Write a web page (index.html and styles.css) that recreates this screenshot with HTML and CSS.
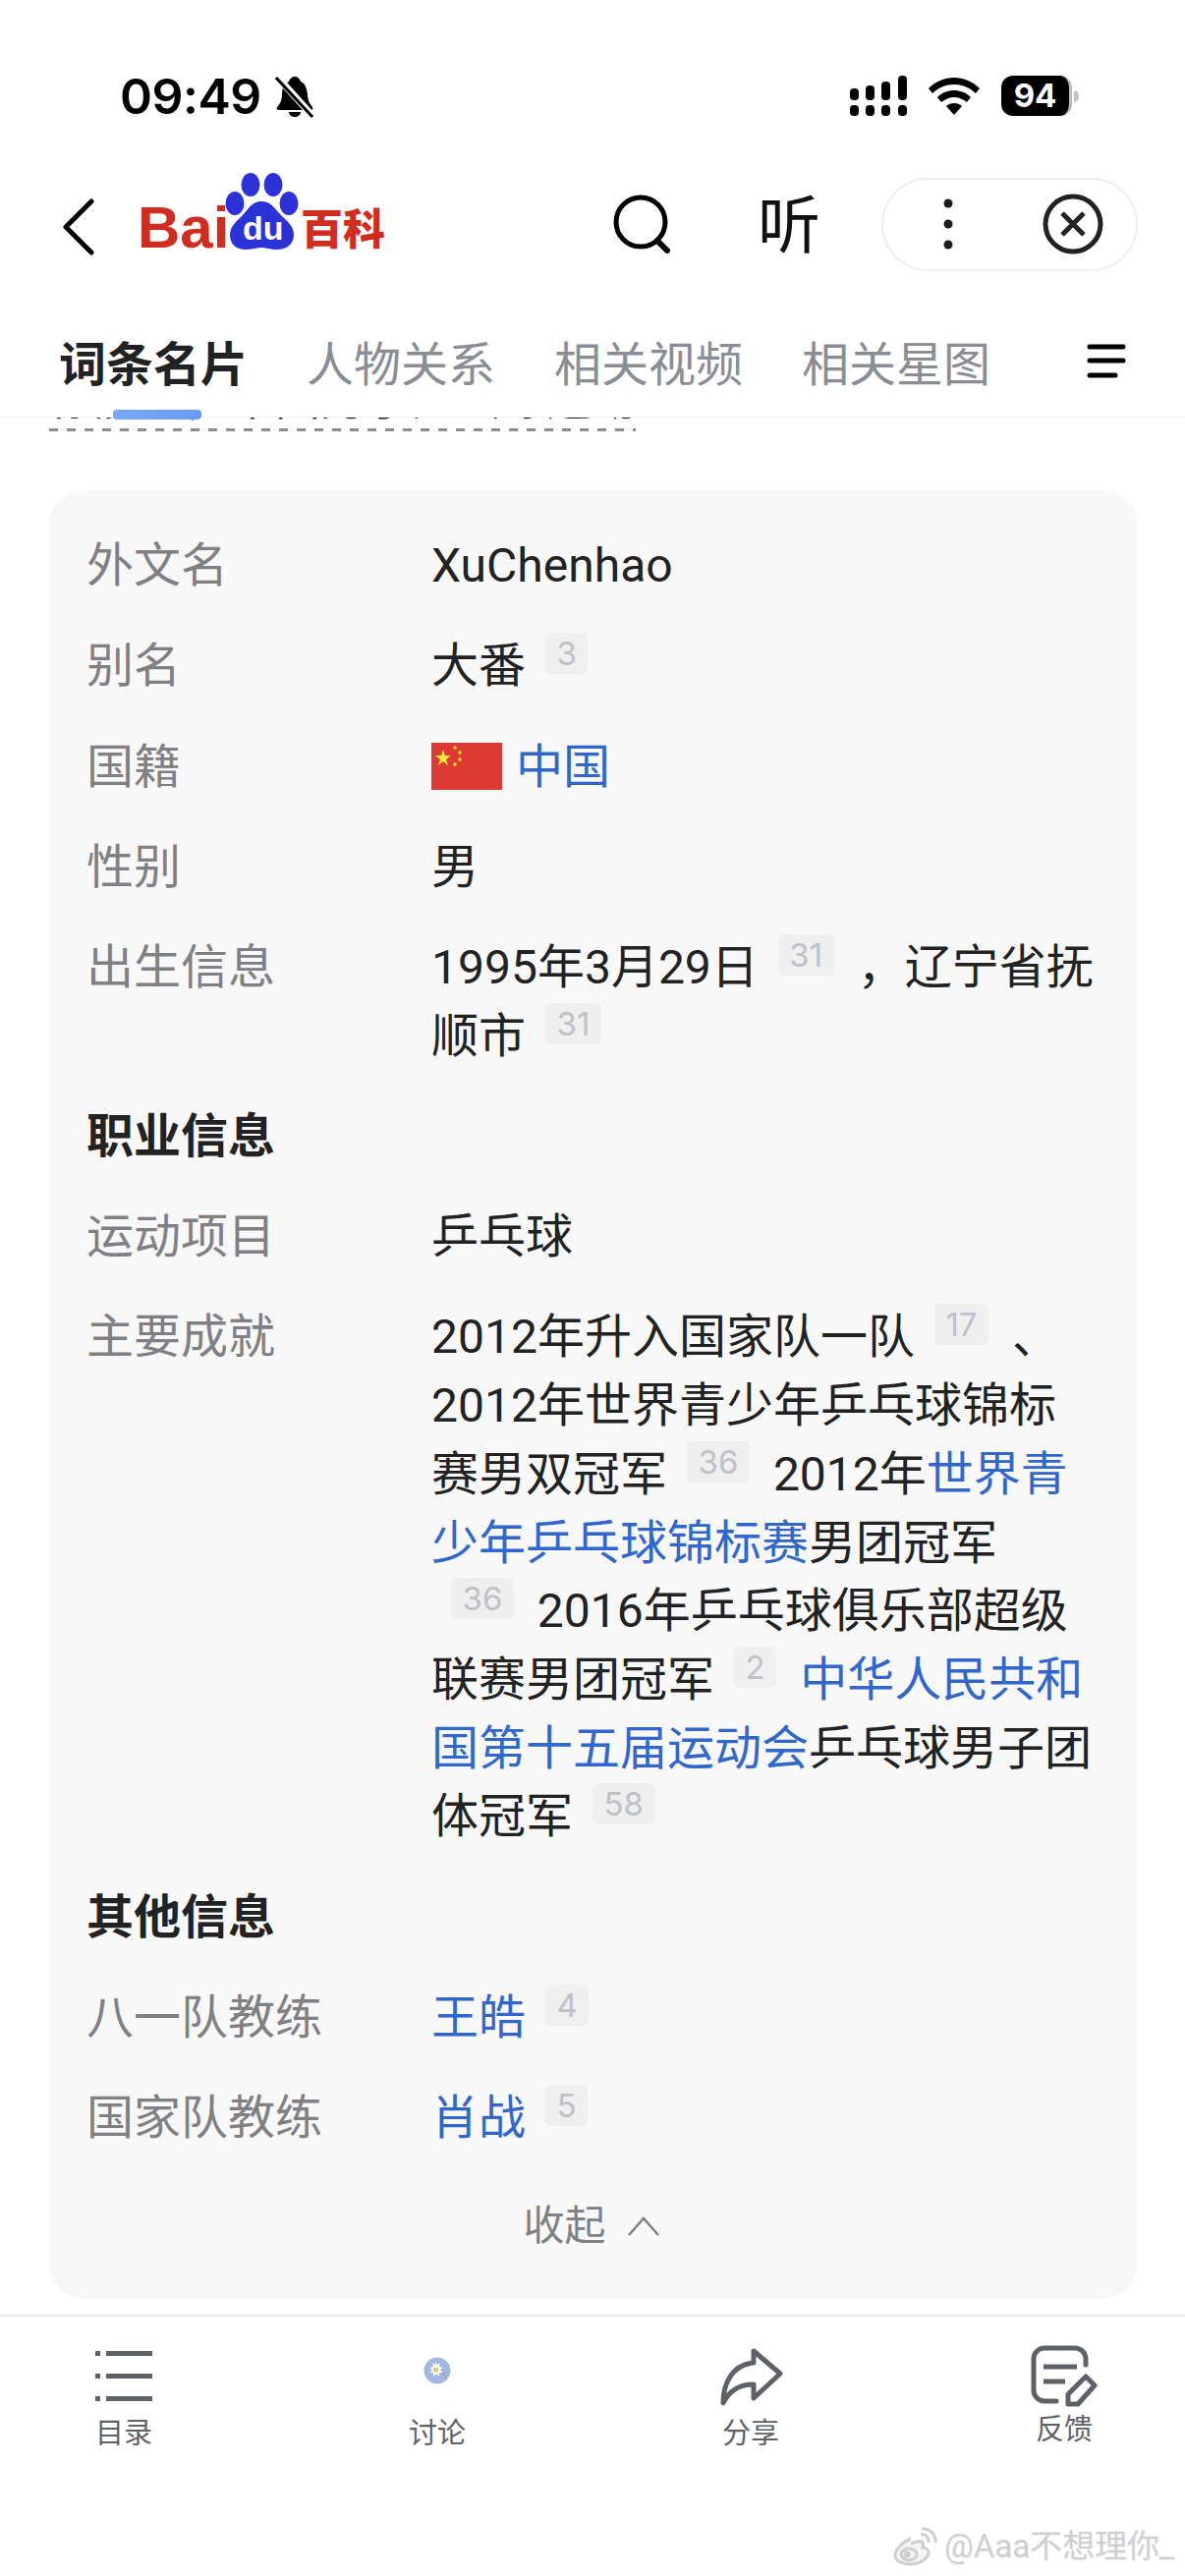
FILE: index.html
```html
<!DOCTYPE html>
<html lang="zh-CN">
<head>
    <meta charset="UTF-8">
    <meta name="viewport" content="width=device-width, initial-scale=1.0">
    <title>徐晨皓 百度百科</title>
    <link rel="stylesheet" href="styles.css">
</head>
<body>
    <!-- 状态栏 -->
    <div class="status-bar">
        <div class="status-left">
            <span class="status-time">09:49</span>
            <svg class="status-bell" width="40" height="43" viewBox="0 0 40 43">
                <path d="M20 1c3 0 5 2 6 5 5 2 6 7 7 13 0 6 2 9 5 13 1 2 0 3-2 3H4c-2 0-3-1-2-3 3-3 5-7 5-13 0-6 2-11 7-13 1-3 3-5 6-5z" fill="#000"/>
                <path d="M14 37h12c0 3-3 5-6 5s-6-2-6-5z" fill="#000"/>
                <path d="M2 1l37 41" stroke="#fff" stroke-width="7"/>
                <path d="M1 2l37 40" stroke="#000" stroke-width="3"/>
            </svg>
        </div>
        <div class="status-right">
            <svg width="58" height="41" viewBox="0 0 58 41" fill="#000">
                <rect x="0" y="13" width="9" height="12" rx="4"/>
                <rect x="16" y="10" width="9" height="15" rx="4"/>
                <rect x="32" y="6" width="9" height="19" rx="4"/>
                <rect x="49" y="0" width="9" height="25" rx="4"/>
                <rect x="0" y="30" width="9" height="11" rx="4"/>
                <rect x="16" y="30" width="9" height="11" rx="4"/>
                <rect x="32" y="30" width="9" height="11" rx="4"/>
                <rect x="49" y="30" width="9" height="11" rx="4"/>
            </svg>
            <svg class="status-wifi" width="52" height="38" viewBox="0 0 52 38" fill="#000">
                <path d="M26 0c10 0 19 4 26 11l-4 5C42 10 34 7 26 7S10 10 4 16l-4-5C7 4 16 0 26 0z"/>
                <path d="M26 13c6 0 12 2 17 7l-4 5c-4-3-8-5-13-5s-9 2-13 5l-4-5c5-5 11-7 17-7z"/>
                <path d="M26 26c3 0 6 1 8 3l-8 9-8-9c2-2 5-3 8-3z"/>
            </svg>
            <div class="battery">
                <span class="battery-body">94</span>
                <span class="battery-nub"></span>
            </div>
        </div>
    </div>

    <!-- 顶部导航 -->
    <div class="top-nav">
        <svg class="nav-back" width="33" height="58" viewBox="0 0 33 58">
            <path d="M30 3L4 29l26 26" fill="none" stroke="#000" stroke-width="5" stroke-linecap="round" stroke-linejoin="round"/>
        </svg>
        <svg class="nav-logo" width="255" height="92" viewBox="0 0 255 92">
            <text class="logo-bai" x="0" y="76">Bai</text>
            <g fill="#2b32d8">
                <ellipse cx="115" cy="12" rx="9.5" ry="12"/>
                <ellipse cx="138" cy="12" rx="9.5" ry="12"/>
                <ellipse cx="99" cy="31" rx="9.5" ry="12"/>
                <ellipse cx="154" cy="31" rx="9.5" ry="12"/>
                <path d="M126 29c10 0 14 8 20 14 6 6 13 11 13 20 0 10-8 15-17 15-7 0-11-2-16-2s-9 2-16 2c-9 0-16-5-16-15 0-9 7-14 13-20 6-6 9-14 19-14z"/>
            </g>
            <text class="logo-du" x="107" y="68">du</text>
            <text class="logo-baike" x="166" y="73">百科</text>
        </svg>
        <svg class="nav-search" width="60" height="60" viewBox="0 0 60 60">
            <circle cx="28" cy="28" r="25" fill="none" stroke="#000" stroke-width="5"/>
            <path d="M45 47l10 10" stroke="#000" stroke-width="6" stroke-linecap="round"/>
        </svg>
        <span class="nav-listen">听</span>
        <div class="nav-capsule">
            <svg width="14" height="56" viewBox="0 0 14 56" fill="#1c1c1c">
                <circle cx="7" cy="7" r="4.5"/>
                <circle cx="7" cy="28" r="4.5"/>
                <circle cx="7" cy="49" r="4.5"/>
            </svg>
            <svg width="62" height="62" viewBox="0 0 62 62">
                <circle cx="31" cy="31" r="28" fill="none" stroke="#222" stroke-width="5"/>
                <path d="M20 20l22 22M42 20L20 42" stroke="#222" stroke-width="5"/>
            </svg>
        </div>
    </div>

    <!-- 标签栏 -->
    <div class="tab-bar">
        <span class="tab tab-active">词条名片</span>
        <span class="tab">人物关系</span>
        <span class="tab">相关视频</span>
        <span class="tab">相关星图</span>
        <svg class="tab-menu" width="40" height="36" viewBox="0 0 40 36">
            <path d="M3 3h34M3 17h34M3 32h26" stroke="#000" stroke-width="5" stroke-linecap="round"/>
        </svg>
    </div>

    <!-- 滚动后只露出底部的摘要 -->
    <div class="summary-clip">
        <div class="summary-text">徐晨皓，中国男子乒乓球运动</div>
    </div>

    <!-- 基本信息卡片 -->
    <div class="info-card">
        <div class="info-row">
            <div class="info-label">外文名</div>
            <div class="info-value">XuChenhao</div>
        </div>
        <div class="info-row">
            <div class="info-label">别名</div>
            <div class="info-value">大番<sup class="ref">3</sup></div>
        </div>
        <div class="info-row">
            <div class="info-label">国籍</div>
            <div class="info-value info-flag">
                <svg width="72" height="48" viewBox="0 0 72 48">
                    <rect width="72" height="48" fill="#dc3a32"/>
                    <path d="M12 7l2 6h6l-5 4 2 6-5-4-5 4 2-6-5-4h6z" fill="#ffe93c"/>
                    <g fill="#ffe93c">
                        <circle cx="24" cy="5" r="1.7"/>
                        <circle cx="29" cy="10" r="1.7"/>
                        <circle cx="29" cy="17" r="1.7"/>
                        <circle cx="24" cy="22" r="1.7"/>
                    </g>
                </svg>
                <a class="link">中国</a>
            </div>
        </div>
        <div class="info-row">
            <div class="info-label">性别</div>
            <div class="info-value">男</div>
        </div>
        <div class="info-row">
            <div class="info-label">出生信息</div>
            <div class="info-value">1995年3月29日<sup class="ref">31</sup>，辽宁省抚顺市<sup class="ref">31</sup></div>
        </div>

        <div class="info-group">职业信息</div>
        <div class="info-row">
            <div class="info-label">运动项目</div>
            <div class="info-value">乒乓球</div>
        </div>
        <div class="info-row">
            <div class="info-label">主要成就</div>
            <div class="info-value">2012年升入国家队一队<sup class="ref">17</sup>、2012年世界青少年乒乓球锦标赛男双冠军<sup class="ref">36</sup>2012年<a class="link">世界青少年乒乓球锦标赛</a>男团冠军<sup class="ref">36</sup>2016年乒乓球俱乐部超级联赛男团冠军<sup class="ref">2</sup><a class="link">中华人民共和国第十五届运动会</a>乒乓球男子团体冠军<sup class="ref">58</sup></div>
        </div>

        <div class="info-group">其他信息</div>
        <div class="info-row">
            <div class="info-label">八一队教练</div>
            <div class="info-value"><a class="link">王皓</a><sup class="ref">4</sup></div>
        </div>
        <div class="info-row">
            <div class="info-label">国家队教练</div>
            <div class="info-value"><a class="link">肖战</a><sup class="ref">5</sup></div>
        </div>

        <div class="info-collapse">
            <span>收起</span>
            <svg width="34" height="22" viewBox="0 0 34 22">
                <path d="M2 20L17 3l15 17" fill="none" stroke="#808080" stroke-width="2.5"/>
            </svg>
        </div>
    </div>

    <!-- 底部工具栏 -->
    <div class="tool-bar">
        <div class="tool-item">
            <div class="tool-icon">
                <svg width="58" height="52" viewBox="0 0 58 52" fill="#5f6168">
                    <rect x="0" y="0" width="5" height="5"/>
                    <rect x="11" y="0" width="47" height="5"/>
                    <rect x="0" y="23" width="5" height="5"/>
                    <rect x="11" y="23" width="47" height="5"/>
                    <rect x="0" y="46" width="5" height="5"/>
                    <rect x="11" y="46" width="47" height="5"/>
                </svg>
            </div>
            <span class="tool-label">目录</span>
        </div>
        <div class="tool-item">
            <div class="tool-icon tool-icon-avatar">
                <svg width="28" height="28" viewBox="0 0 28 28">
                    <circle cx="14" cy="14" r="13.5" fill="#a3b8de"/>
                    <path d="M15 13c4 2 7 5 8 9" fill="none" stroke="#7f9a86" stroke-width="1"/>
                    <path d="M12 5l2 3 3-2-1 4 4 1-3 2 3 3-4 0 0 4-3-3-3 3 0-4-4 0 3-3-3-2 4-1-1-4 3 2z" fill="#fbfaf4"/>
                    <circle cx="12.5" cy="13" r="2.6" fill="#e7c56e"/>
                </svg>
            </div>
            <span class="tool-label">讨论</span>
        </div>
        <div class="tool-item">
            <div class="tool-icon tool-icon-share">
                <svg width="66" height="62" viewBox="0 0 66 62">
                    <path d="M34 5L61 28 34 53V39C20 39 9 46 3 58 3 38 12 19 34 17Z" fill="none" stroke="#5f6168" stroke-width="5" stroke-linejoin="round"/>
                </svg>
            </div>
            <span class="tool-label">分享</span>
        </div>
        <div class="tool-item">
            <div class="tool-icon">
                <svg width="68" height="64" viewBox="0 0 68 64" fill="none" stroke="#5f6168" stroke-width="5">
                    <path d="M26 57H14A11 11 0 0 1 3 46V14A11 11 0 0 1 14 3H44A11 11 0 0 1 56 14V20" stroke-linecap="round"/>
                    <path d="M13 22H47M13 37H35"/>
                    <path d="M38 60V50L56 32 65 41 48 60Z" stroke-linejoin="round"/>
                </svg>
            </div>
            <span class="tool-label tool-label-up">反馈</span>
        </div>
    </div>

    <!-- 水印 -->
    <div class="watermark">
        <svg width="46" height="40" viewBox="0 0 46 40" fill="none" stroke="#cfcfcf" stroke-width="3">
            <path d="M18 12C8 16 2 24 2 29c0 6 8 9 15 9 10 0 19-6 19-12 0-3-3-5-6-5 2-5-1-7-5-6-3 0-5 2-7 2" fill="#f4f4f4"/>
            <ellipse cx="16" cy="28" rx="8" ry="6"/>
            <circle cx="14" cy="28" r="2" fill="#cfcfcf"/>
            <path d="M28 8c5-1 9 3 8 8M29 2c8-1 15 6 14 14"/>
        </svg>
        <span>@Aaa不想理你_</span>
    </div>
</body>
</html>
```

FILE: styles.css
```css
* {
    margin: 0;
    padding: 0;
    box-sizing: border-box;
}

html, body {
    width: 1206px;
    height: 2622px;
    overflow: hidden;
    background-color: #fff;
    font-family: Roboto, 'Noto Sans CJK SC', sans-serif;
}

body {
    position: relative;
    color: #222;
}

/* 状态栏 */
.status-bar {
    height: 170px;
    padding: 77px 108px 0 122px;
    display: flex;
    justify-content: space-between;
    align-items: flex-start;
}

.status-left {
    display: flex;
    align-items: center;
    height: 42px;
}

.status-time {
    font-family: Inter, sans-serif;
    font-size: 50px;
    font-weight: 600;
    line-height: 42px;
    color: #000;
    letter-spacing: -0.5px;
}

.status-bell {
    margin-left: 14px;
}

.status-right {
    display: flex;
    align-items: center;
}

.status-wifi {
    margin-left: 22px;
}

.battery {
    margin-left: 22px;
    display: flex;
    align-items: center;
}

.battery-body {
    width: 72px;
    height: 41px;
    border-radius: 12px;
    background-color: #000;
    border-right: 3px solid #bdbdbd;
    color: #fff;
    font-family: Inter, sans-serif;
    font-size: 33px;
    font-weight: 700;
    line-height: 41px;
    text-align: center;
}

.battery-nub {
    width: 5px;
    height: 12px;
    margin-left: 2px;
    border-radius: 0 6px 6px 0;
    background-color: #c4c4c4;
}

/* 顶部导航 */
.top-nav {
    height: 116px;
    padding-left: 63px;
    display: flex;
    align-items: center;
}

.nav-back {
    margin-top: 5px;
    flex: none;
}

.nav-logo {
    margin-left: 44px;
    margin-top: -12px;
    flex: none;
}

.logo-bai {
    font-family: 'Liberation Sans', sans-serif;
    font-size: 60px;
    font-weight: 700;
    fill: #d02c1f;
}

.logo-du {
    font-family: 'Liberation Sans', sans-serif;
    font-size: 34px;
    font-weight: 700;
    fill: #fff;
}

.logo-baike {
    font-family: 'Noto Sans CJK SC', sans-serif;
    font-size: 43px;
    font-weight: 900;
    fill: #d02c1f;
}

.nav-search {
    margin-left: 229px;
    flex: none;
}

.nav-listen {
    margin-left: 87px;
    margin-top: 5px;
    width: 64px;
    font-size: 64px;
    line-height: 64px;
    color: #111;
}

.nav-capsule {
    margin-left: 62px;
    width: 261px;
    height: 95px;
    padding: 0 33px 0 59px;
    border: 2px solid #eee;
    border-radius: 48px;
    display: flex;
    justify-content: space-between;
    align-items: center;
}

/* 标签栏 */
.tab-bar {
    height: 139px;
    padding: 62px 60px 0 60px;
    border-bottom: 1px solid #f0f0f0;
    display: flex;
    align-items: flex-start;
    gap: 60px;
}

.tab {
    position: relative;
    font-size: 48px;
    line-height: 48px;
    color: #8a8c96;
}

.tab-active {
    font-weight: 700;
    color: #222;
}

.tab-active::after {
    content: "";
    position: absolute;
    left: 55px;
    top: 69px;
    width: 90px;
    height: 10px;
    border-radius: 4px;
    background: linear-gradient(to right, #7aa7f8, #6a9cf6);
}

.tab-menu {
    margin-left: auto;
    margin-top: 2px;
}

/* 被标签栏遮住的摘要 */
.summary-clip {
    height: 14px;
    margin-left: 50px;
    width: 597px;
    overflow: hidden;
    display: flex;
    align-items: flex-end;
}

.summary-text {
    flex: none;
    width: 597px;
    font-size: 46px;
    line-height: 48px;
    padding-bottom: 9px;
    white-space: nowrap;
    overflow: hidden;
    color: #222;
    background-image: repeating-linear-gradient(90deg, #8a8c96 0, #8a8c96 9px, transparent 9px, transparent 18px);
    background-size: 100% 3px;
    background-position: left bottom;
    background-repeat: no-repeat;
}

/* 基本信息卡片 */
.info-card {
    margin: 60px 48px 0 50px;
    padding: 42px 42px 39px 38px;
    background-color: #f8f8f8;
    border-radius: 36px;
    display: flex;
    flex-direction: column;
    gap: 32.55px;
    font-size: 48px;
    line-height: 69.7px;
}

.info-row {
    display: grid;
    grid-template-columns: 351px 1fr;
}

.info-label {
    color: #808084;
}

.info-value {
    color: #222;
}

.info-flag {
    display: flex;
    align-items: center;
    gap: 14px;
}

.info-group {
    font-weight: 700;
    color: #222;
}

.link {
    color: #3167cc;
}

.ref {
    display: inline-block;
    height: 42px;
    margin: 1px 24px 0 20px;
    padding: 0 11.5px;
    border-radius: 6px;
    background-color: #efefef;
    color: #bfc0c8;
    font-family: Inter, sans-serif;
    font-size: 33px;
    line-height: 42px;
    vertical-align: top;
}

.info-collapse {
    margin-top: 8px;
    display: flex;
    justify-content: center;
    align-items: center;
    gap: 21px;
    color: #808084;
    font-size: 42px;
}

/* 底部工具栏 */
.tool-bar {
    margin-top: 16px;
    padding: 28px 68px 0 71px;
    border-top: 2px solid #ececec;
    display: flex;
    justify-content: space-between;
}

.tool-item {
    width: 110px;
    display: flex;
    flex-direction: column;
    align-items: center;
}

.tool-icon {
    height: 66px;
    display: flex;
    justify-content: center;
    align-items: center;
}

.tool-icon-avatar {
    padding-bottom: 12px;
}

.tool-icon-share {
    margin-left: 4px;
}

.tool-label {
    margin-top: 7px;
    font-size: 29px;
    line-height: 36px;
    color: #5f6168;
}

.tool-label-up {
    margin-top: 3px;
}

/* 水印 */
.watermark {
    position: absolute;
    right: 11px;
    top: 2572px;
    display: flex;
    align-items: center;
    gap: 6px;
    font-size: 33px;
    line-height: 40px;
    color: #cfcfcf;
    text-shadow: 0 0 2px #fff, 1px 1px 1px #eee;
}
```
